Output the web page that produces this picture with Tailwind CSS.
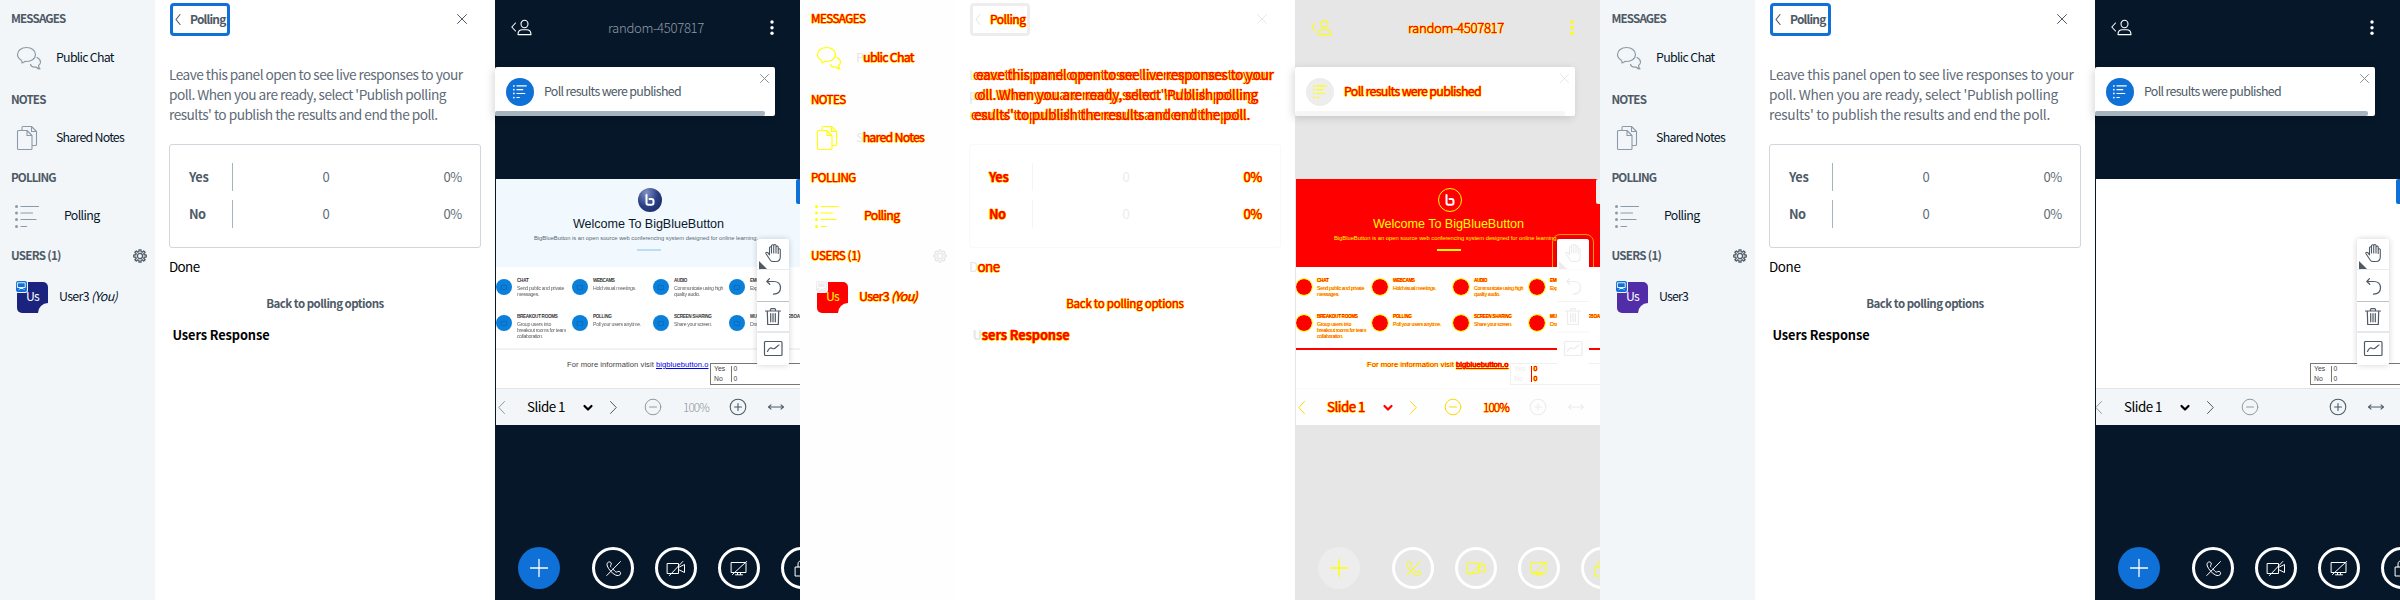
<!DOCTYPE html>
<html lang="en">
<head>
<meta charset="utf-8">
<title>Polling</title>
<script src="https://cdn.jsdelivr.net/npm/@tailwindcss/browser@4"></script>
</head>
<body class="w-[2400px] h-[600px] overflow-hidden bg-white font-['Noto_Sans_CJK_SC',sans-serif] text-[14px] leading-none">
<main id="app" class="flex w-[2400px] h-[600px]"></main>
<script>
const HOT = "text-[#ff0000] [-webkit-text-stroke:0.4px_#f00] [text-shadow:1px_0_#ff0,-1px_0_#ff0,0_1px_#ff0]";
const themes = {
  before: {
    diff: false, side: "bg-[#f3f6f9]", muted: "text-[#4e5a66]", item: "text-[#06172a]", body: "text-[#5f6b77]", black: "text-black",
    icon: "text-[#8b9aa8]", gear: "text-[#4e5a66]", focus: "border-[#0f70d7]", line: "border-[#cfd6dd]", rule: "bg-[#a7b3bd]", zero: "text-[#5f6b77]",
    dark: "bg-[#06172a]", nav: "text-white", title: "text-[#8f99a3]", blue: "bg-[#0f70d7]", toastIcon: "text-white", bar: "bg-[#a7b3bd]",
    avatar: "bg-[#1a237e]", us: "text-white", badge: "bg-[#0f70d7]", tool: "text-[#4e5a66]", toolbar: "bg-[#f3f6f9] border-[#dfe5ea]",
    dis: "text-[#9199a2]", ring: "border-white", ringIcon: "text-white", band: "bg-[#f1f9fe]", dot: "bg-[#0a80db]", dotIcon: "text-[#0766b5]", slideText: "text-[#333]", slideTitle: "text-[#0b1a2b]", sub: "text-[#5a6672]",
    accent: "bg-[#b9def6]", hr: "bg-[#f2f2f2]", foot: "text-[#444]", link: "text-[#0000ee]", poll: "border-[#777] text-[#444]", pollBar: "bg-[#777]", pollNum: "text-[#444]", logo: "bg-radial-[at_35%_20%] from-[#8091c4] via-[#2b3f86] to-[#17245c]", logoB: "text-white", caret: "text-black", toolLine: "border-[#bcc3ca]", page: "bg-white"
  }
};
themes.after = { ...themes.before, avatar: "bg-[#512da8]" };
themes.diff = {
  diff: true, side: "bg-[#fefefe]", muted: HOT, item: HOT, body: HOT, black: HOT,
  icon: "text-[#ffff00]", gear: "text-[#e8e8e8]", focus: "border-[#ededed]", line: "border-[#f9f9f9]", rule: "bg-[#f4f4f4]", zero: "text-[#ececec]",
  dark: "bg-[#e6e6e6]", nav: "text-[#ffff00]", title: HOT, blue: "bg-[#ededed]", toastIcon: "text-[#ffff00]", bar: "bg-[#f6f6f6]",
  avatar: "bg-[#ff0000]", us: "text-[#ffff00]", badge: "bg-[#ededed]", tool: "text-[#ececec]", toolbar: "bg-[#fefefe] border-[#fafafa]",
  dis: "text-[#ffd800]", ring: "border-white", ringIcon: "text-[#ffff00]", band: "bg-[#ff0000]", dot: "bg-[#ff0000] outline outline-[#ffff00]", dotIcon: "text-[#ff0000]", slideText: "text-[#ff0000] [text-shadow:1px_0_#ff0,-1px_0_#ff0]", slideTitle: "text-[#ffff00]", sub: "text-[#ffff00]",
  accent: "border border-[#ffff00]", hr: "bg-[#ff0000]", foot: "text-[#ff0000] [text-shadow:1px_0_#ff0,-1px_0_#ff0]", link: HOT, poll: "border-[#f0f0f0] text-[#ececec]", pollBar: "bg-[#ff0000]", pollNum: HOT, logo: "border border-[#ffff00]", logoB: "text-white", caret: "text-[#ff0000]", toolLine: "border-[#f4f4f4]", page: "bg-white"
};

// Text whose tracking is fitted to a width; the first `pale` letters are unchanged ones in the diff.
const t = (s, w, cls, pale = 0) => `<span data-w="${w}" class="inline-block w-max shrink-0 whitespace-nowrap ${cls}">${pale ? `<span class="text-[#e6e6e6] [text-shadow:none] [-webkit-text-stroke:0px]">${s.slice(0, pale)}</span>${s.slice(pale)}` : s}</span>`;
const ic = (w, h, cls, d, sw = 1) => `<svg class="shrink-0 overflow-visible ${cls}" width="${w}" height="${h}" viewBox="0 0 ${w} ${h}" fill="none" stroke="currentColor" stroke-width="${sw}" stroke-linecap="round" stroke-linejoin="round">${d}</svg>`;
const P = d => `<path d="${d}"/>`;

const I = {
  chat: P("M5 16C5.500 14.500 5 13.800 4 13C1.500 11.500.5 9.500.5 7.500C.5 3.500 4.500.5 9.500.5S18.500 3.500 18.500 7.500S14.500 14.500 9.500 14.500C9 14.500 8.500 14.500 8 14.400C7 15.500 6 16 5 16ZM20 10.500C22 11.500 23.500 13 23.500 15C23.500 16.500 23 17.500 21.500 18.500C21.500 20 22 21 23 22C21 22 20 21 19 20C16 20.500 14 19 13.500 17.500"),
  notes: P("M1.500 4.500H10L15 9.500V22.500Q15 23.500 14 23.500H1.500Q.5 23.500.5 22.500V5.500Q.5 4.500 1.500 4.500ZM10 4.500V9.500H15M5 4V1.500Q5 .5 6 .5H14.500L19.500 5.500V18.500Q19.500 19.500 18.500 19.500H15.500M14.500.5V5.500H19.500"),
  list: P("M6 1.500H23.500M6 8H17.500M6 14.500H21M6 21.500H11.500") + `<g fill="currentColor" stroke="none"><circle cx="1.500" cy="1.500" r="1.500"/><circle cx="1.500" cy="8" r="1.500"/><circle cx="1.500" cy="14.500" r="1.500"/><circle cx="1.500" cy="21.500" r="1.500"/></g>`,
  gear: P("M5.900 2.700L6 .8H8L8.100 2.700L9.300 3.200L10.700 1.900L12.100 3.300L10.800 4.700L11.300 5.900L13.200 6V8L11.300 8.100L10.800 9.300L12.100 10.700L10.700 12.100L9.300 10.800L8.100 11.300L8 13.200H6L5.900 11.300L4.700 10.800L3.300 12.100L1.900 10.700L3.200 9.300L2.700 8.100L.8 8V6L2.700 5.900L3.200 4.700L1.900 3.300L3.300 1.900L4.700 3.200Z") + `<circle cx="7" cy="7" r="2.600"/>`,
  left: P("M5 .5L1 5.500L5 10.500"),
  x10: P("M.5.5L9.500 9.500M9.500.5L.5 9.500"),
  user: P("M4.500 3L.8 7L4.500 11") + `<ellipse cx="13.500" cy="4" rx="3.500" ry="3.700"/>` + P("M7 14.600C7 11.500 9 9.800 11.500 9.800H15.500C18 9.800 20 11.500 20 14.600Z"),
  hand: P("M5.500 16.500L1 9.800C.3 8.500 2 7.700 3 8.800L4.500 10.800V3.800C4.500 2.300 6.500 2.300 6.500 3.800V9V1.900C6.500.4 8.700.4 8.700 1.900V9V1.600C8.700.1 11 .1 11 1.600V9V3.200C11 1.700 13.200 1.700 13.200 3.200V9.500V5.800C13.200 4.300 15.300 4.300 15.300 5.800V12.500C15.300 15.500 13.500 17.500 11 17.500H8C7 17.500 6 17.200 5.500 16.500Z"),
  undo: P("M3.500.7L.8 3.500L3.800 6.300M1 3.500H7.500C12 3.500 14.500 6 14.500 9.800C14.500 13.500 12 16 7.500 16.200"),
  trash: P("M.5 3H15.500M5.500 2.800V1.500Q5.500.6 6.500.6H9.500Q10.500.6 10.500 1.500V2.800M2.300 3.300L2.700 16.500H13.300L13.700 3.300M5.700 5.500V13.800M8 5.500V13.800M10.300 5.500V13.800"),
  chart: `<rect x=".5" y=".5" width="17.500" height="14" rx="1"/>` + P("M3.500 10.500C5.500 6 7 6.500 8.500 7.500C11 9 12.500 5 15 4"),
  phone: P("M14.500.5L.8 14.500M4.800 6C3.800 5 5 4 5.300 3C5.500 1.500 4 .6 2.700 1C.8 1.500.8 3.500 1.300 5C2.500 8.500 6.500 12.500 9.500 14C11.500 14.900 14 14.800 14.500 12.800C14.900 11 13.500 10 12 10.500C11 11 10 11.500 9 10.300L6.800 8"),
  cam: P("M.5 2.500H11.500V12.500H.5ZM12 6.200L17.500 3.500V11.500L12 8.800M15.800.5L2.500 14.500"),
  screen: P("M.5 1.500H15V11.500H.5ZM4.500 13.800H11.500M6.500 11.800V13.500M9.500 11.800V13.500M15.500.5L1.500 13.500"),
  lock: P("M.5 7H14V16H.5ZM3 7V4C3 1.500 5 .5 7.200 .5")
};

function panel(m) {
  const k = themes[m], d = k.diff, b = m === "after";
  const p = n => d ? n : 0;
  const semi = d ? "" : "font-bold ";
  const head = (s, w, h, extra = "") => `<div class="flex items-center justify-between ${b ? "pl-[11.500px]" : "pl-[11px]"} pr-[8px] ${h} ${k.muted}">${t(s, w, "text-[11.600px] " + semi)}${extra}</div>`;
  const row = (icon, txt, cls) => `<div class="flex items-center ${cls}">${icon}${txt}</div>`;
  const it = "text-[12.400px] -translate-y-px ";
  const feat = (title, w, lines) => `<div class="flex gap-[5px] w-[140px]"><span class="mt-[8px] size-[16px] shrink-0 rounded-full grid place-items-center ${k.dot}">${ic(6, 5, k.dotIcon, P("M.5.5H5.500V4.500H.5Z"), .7)}</span>
    <div class="flex flex-col items-start font-['Liberation_Sans',sans-serif] pt-[5.500px] ${k.slideText}">${t(title, w, "text-[4.600px] font-bold leading-[8.500px]")}${lines.map(l => t(l[0], l[1], "text-[5.200px] leading-[6.200px] opacity-80")).join("")}</div></div>`;
  const para = (w) => ["Leave this panel open to see live responses to your", "poll. When you are ready, select 'Publish polling", "results' to publish the results and end the poll."]
    .map((s, i) => `<div class="h-[20px] flex items-center">${t(s, w[i], "text-[13.700px] " + (d ? "[text-shadow:-1px_0_#ff0,1px_0_#ff0,-3px_0_#f00,-4px_0_#ff0]" : ""), p(1))}</div>`).join("");
  const result = (name, w, h) => `<div class="flex items-center h-[28px] ${h}"><div class="w-[43px] ${k.muted}">${t(name, w, "text-[12.800px] font-bold -translate-y-[1.500px]")}</div><div class="w-px h-[28px] ${k.rule}"></div>
    <div class="w-[186px] text-center ${k.zero}">${t("0", 7, "text-[13px] -translate-y-[1.500px]")}</div><div class="ml-auto ${k.body}">${t("0%", 18.5, "text-[13px] -translate-y-[1.500px]")}</div></div>`;
  const ring = i => `<button class="size-[42px] shrink-0 rounded-full border-3 grid place-items-center ${k.ring}">${i}</button>`;

  return `<section class="flex w-[800px] h-[600px] shrink-0 overflow-hidden">
  <nav class="w-[155px] shrink-0 flex flex-col ${k.side}">
    ${head("MESSAGES", 54.5, "h-[38px]")}
    ${row(ic(24, 22, k.icon, I.chat, 1.2), t("Public Chat", b ? 58.5 : 57.8, it + k.item, p(1)), "h-[40px] pl-[17px] gap-[15px]")}
    ${head("NOTES", 34.5, "h-[44px]")}
    ${row(ic(20, 24, k.icon, I.notes, 1.1), t("Shared Notes", b ? 69 : 68, it + k.item, p(1)), "h-[32px] pl-[17px] gap-[19px]")}
    ${head("POLLING", 44.8, "h-[48px]")}
    ${row(ic(24, 23, k.icon, I.list, 1.2), t("Polling", 35.5, it + k.item), "h-[28px] pl-[15px] gap-[25px]")}
    ${head("USERS (1)", 49.8, "h-[52px]", ic(14, 14, k.gear, I.gear, 1.3))}
    <div class="flex items-center h-[30px] pl-[17px] gap-[11px]">
      <div class="relative size-[31px] shrink-0 rounded-[5px] overflow-visible grid place-items-center ${k.avatar}">
        ${t("Us", 12.8, "text-[12.200px] -translate-y-px " + k.us)}
        <span class="absolute -right-px -bottom-px size-[11px] rounded-tl-[10px] ${k.side}"></span>
        <span class="absolute -left-px -top-px size-[11px] rounded-[2px] ring-1 grid place-items-center ${d ? "ring-white" : "ring-[#f3f6f9]"} ${k.badge}">${ic(9, 8, "text-white", P("M.8.8H8.200V5.500H.8ZM2 7.500L3 6.500H6L7 7.500"), .9)}</span>
      </div>
      ${b ? t("User3", 29, it + k.item) : t(`User3 <i>(You)</i>`, 58, it + k.item)}
    </div>
  </nav>
  <aside class="w-[340px] shrink-0 px-[14px] ${k.page}">
    <header class="flex items-start justify-between pt-[3px] pl-px pr-[14px]">
      <button class="flex items-center h-[33px] border-[3px] rounded-[4px] pl-[2px] gap-[9px] ${b ? "w-[61px]" : "w-[60px]"} ${k.focus}">${ic(6, 11, d ? k.gear : k.muted, I.left, 1.1)}${t("Polling", 35.5, "text-[12px] -mt-[2px] " + semi + k.muted)}</button>
      <span class="mt-[11px]">${ic(10, 10, d ? k.gear : k.muted, I.x10, 1)}</span>
    </header>
    <div class="mt-[29px] ${k.body}">${para(b || d ? [304.5, 289, 281] : [293.5, 277, 268.5])}</div>
    <div class="mt-[19px] h-[104px] w-[312px] border rounded-[3px] pl-[19px] pr-[18px] pt-[18px] ${k.line}">
      ${result("Yes", 19.5, "mb-[9px]")}${result("No", 16.5, "")}
    </div>
    <div class="h-[39px] flex items-center ${k.black}">${t("Done", b ? 31.5 : 30.5, "text-[13.400px] -translate-y-px", p(1))}</div>
    <div class="h-[33px] flex items-center justify-center ${k.muted}">${t("Back to polling options", 117.5, "text-[11.500px] " + semi)}</div>
    <div class="h-[30px] flex items-center pl-[3.500px] ${k.black}">${t("Users Response", 97, "text-[12.800px] font-bold", p(1))}</div>
  </aside>
  <div class="w-[305px] shrink-0 flex flex-col ${k.dark}">
    <header class="flex items-center h-[55px] pl-[16px] pr-[26px] justify-between">
      ${ic(21, 15, k.nav, I.user, 1.1)}
      ${b ? "" : `<span class="ml-[10px]">${t("random-4507817", 96, "text-[13.200px] font-light " + k.title)}</span>`}
      <svg class="${k.nav}" width="4" height="15" fill="currentColor"><circle cx="2" cy="2" r="1.700"/><circle cx="2" cy="7.700" r="1.700"/><circle cx="2" cy="13.300" r="1.700"/></svg>
    </header>
    <div class="mt-[12px] h-[49px] w-[280px] bg-white rounded-[2px] shadow-[-2px_2px_8px_rgba(0,0,0,0.15)] flex flex-col">
      <div class="flex h-[44px] pl-[11px] pr-[6px]">
        <span class="mt-[11px] size-[28px] rounded-full grid place-items-center ${k.blue}"><svg class="${k.toastIcon}" width="14" height="14" viewBox="0 0 24 24" fill="none" stroke="currentColor" stroke-width="1.900">${I.list}</svg></span>
        <span class="ml-[10px] mt-[6px] h-[38px] flex items-center">${t("Poll results were published", 137, "text-[12.400px] -translate-y-px " + (d ? HOT : "text-[#4e5a66]"))}</span>
        <span class="ml-auto mt-[7px]">${ic(9, 9, d ? k.gear : "text-[#8b9299]", P("M.5.5L8.500 8.500M8.500.5L.5 8.500"))}</span>
      </div>
      <div class="h-[5px] rounded-[2px] ${b ? "w-[273px]" : "w-[270px]"} ${k.bar}"></div>
    </div>
    <div class="relative mt-[63px] ml-px h-[209px] w-[304px] overflow-hidden bg-white font-['Liberation_Sans',sans-serif]">
      ${b ? "" : `<div class="flex flex-col items-center h-[88px] pt-[9px] w-[308px] ${k.band}">
        <span class="size-[24px] rounded-full grid place-items-center ${k.logo}">${ic(10, 11, k.logoB, P("M1.500 0V8Q1.500 9.800 3.300 9.800H6.500Q8.500 9.800 8.500 8V6Q8.500 4 6.500 4H4.500"), 2)}</span>
        ${t("Welcome To BigBlueButton", 151, "mt-[4.500px] text-[12.600px] leading-[15px] -translate-x-[1.500px] " + k.slideTitle)}
        ${t("BigBlueButton is an open source web conferencing system designed for online learning.", 224, "mt-[2px] text-[5.800px] leading-[8px] -translate-x-[4px] " + k.sub)}
        <span class="mt-[7.500px] w-[24px] h-[2px] -translate-x-[1px] ${k.accent}"></span>
      </div>
      <div class="grid grid-cols-[76px_81px_76px_71px] grid-rows-[36px_46px] h-[82px] pt-[4px] box-content">
        ${feat("CHAT", 11.5, [["Send public and private", 47], ["messages.", 22]])}
        ${feat("WEBCAMS", 21.5, [["Hold visual meetings.", 43]])}
        ${feat("AUDIO", 13, [["Communicate using high", 49], ["quality audio.", 26]])}
        ${feat("EMOJIS", 16, [["Express yourself.", 34]])}
        ${feat("BREAKOUT ROOMS", 40.5, [["Group users into", 34], ["breakout rooms for team", 49], ["collaboration.", 26]])}
        ${feat("POLLING", 18.5, [["Poll your users anytime.", 48]])}
        ${feat("SCREEN SHARING", 37.5, [["Share your screen.", 38]])}
        ${feat("MULTI-USER WHITEBOARD", 56, [["Draw together.", 30]])}
      </div>
      <div class="-mt-[5px] h-[2px] ${k.hr}"></div>
      <div class="flex mt-[9px] pl-[71px] text-[7.600px] leading-[11px]">${t("For more information visit&nbsp;", 89, k.foot)}${t("bigbluebutton.o", 52.5, "underline " + k.link)}</div>`}
      <div class="absolute left-[300px] top-0 w-[8px] h-[25px] rounded-[2px] ${k.blue}"></div>
      <div class="absolute left-[214px] top-[184px] w-[100px] h-[22px] border flex pl-[3px] text-[6.800px] ${k.poll}">
        <div class="w-[16.500px] leading-[10px]"><div>Yes</div><div>No</div></div><div class="w-px my-[2px] ${k.pollBar}"></div><div class="pl-[2px] leading-[10px] ${k.pollNum}"><div>0</div><div>0</div></div>
      </div>
      <div class="absolute left-[261px] top-[60px] w-[32px] h-[126px] rounded-[3px] bg-white shadow-[0_0_6px_rgba(0,0,0,0.18)] ${d ? "outline outline-[#ffff00]/60 outline-offset-4 [clip-path:inset(-6px_-6px_98px_-6px)]" : ""}"></div>
      <div class="absolute left-[261px] top-[60px] w-[32px] h-[126px] rounded-[3px] bg-white flex flex-col ${k.tool}">
        <div class="relative h-[31px] pl-[8px] pt-[5px] border-b ${d ? "border-[#fafafa]" : "border-[#e8ecf0]"}">${ic(16, 18, "", I.hand, 1.1)}<svg class="absolute left-[2px] bottom-0" width="8" height="8"><path d="M0 0V8H8Z" fill="currentColor"/></svg></div>
        <div class="h-[32px] pl-[9px] pt-[8px] border-b ${k.toolLine}">${ic(15, 17, "", I.undo, 1.2)}</div>
        <div class="h-[31px] pl-[8px] pt-[6px] border-b-2 ${d ? "border-[#fafafa]" : "border-[#e4e9ee]"}">${ic(16, 17, "", I.trash, 1.2)}</div>
        <div class="pl-[7px] pt-[8px]">${ic(18, 15, "", I.chart, 1.2)}</div>
      </div>
    </div>
    <div class="ml-px h-[37px] border-t flex items-center overflow-hidden ${k.toolbar}">
      <div class="flex items-center shrink-0 ${b ? "-ml-px w-[212px]" : "pl-[2px] w-[216px]"}">
        ${ic(7, 13, k.dis, P("M6.500.5L.8 6.500L6.500 12.500"))}
        <span class="ml-[22px] -mt-[2px] ${k.black}">${t("Slide 1", 38, "text-[13.400px]")}</span>
        <span class="ml-[18px] mt-px">${ic(10, 6, k.caret, P("M1.500 1L5 4.500L8.500 1"), 2.2)}</span>
        <span class="ml-[17px]">${ic(7, 13, d ? k.dis : k.muted, P("M.5.5L6.300 6.500L.5 12.500"))}</span>
        <span class="ml-[28px]">${ic(16, 16, k.dis, `<circle cx="8" cy="8" r="7.800"/>` + P("M4.500 8H11.500"))}</span>
        ${b ? "" : `<span class="ml-[22px] -mt-[2px]">${t("100%", 26, "text-[11.800px] font-light " + (d ? HOT : "text-[#8b9299]"))}</span>`}
      </div>
      <span class="ml-auto">${ic(16, 16, k.tool, `<circle cx="8" cy="8" r="7.800"/>` + P("M4.500 8H11.500M8 4.500V11.500"), 1.1)}</span>
      <span class="ml-[22px] mr-[16px]">${ic(16, 6, k.tool, P("M3 .8L.5 3L3 5.200M13 .8L15.500 3L13 5.200M.8 3H15.200"), 1.1)}</span>
    </div>
    <footer class="mt-auto mb-[11px] flex pl-[23px] items-center w-[305px] overflow-hidden">
      <button class="size-[42px] shrink-0 rounded-full grid place-items-center mr-[32px] ${k.blue}">${ic(18, 18, d ? k.ringIcon : "text-white", P("M9 .5V17.500M.5 9H17.500"), 1.3)}</button>
      <div class="flex gap-[21px]">${ring(ic(15, 15, k.ringIcon, I.phone))}${ring(ic(18, 15, k.ringIcon, I.cam))}${ring(ic(16, 15, k.ringIcon, I.screen))}${ring(ic(14, 16, k.ringIcon, I.lock))}</div>
    </footer>
  </div>
</section>`;
}

document.getElementById("app").innerHTML = ["before", "diff", "after"].map(panel).join("");
function fit() {
  document.querySelectorAll("[data-w]").forEach(e => {
    e.style.letterSpacing = "0px";
    const r = document.createRange();
    r.selectNodeContents(e);
    e.style.letterSpacing = (e.dataset.w - r.getBoundingClientRect().width) / e.textContent.length + "px";
  });
}
fit();
addEventListener("load", fit);
document.fonts.ready.then(fit);
setTimeout(fit, 50);
setTimeout(fit, 200);
</script>
</body>
</html>
